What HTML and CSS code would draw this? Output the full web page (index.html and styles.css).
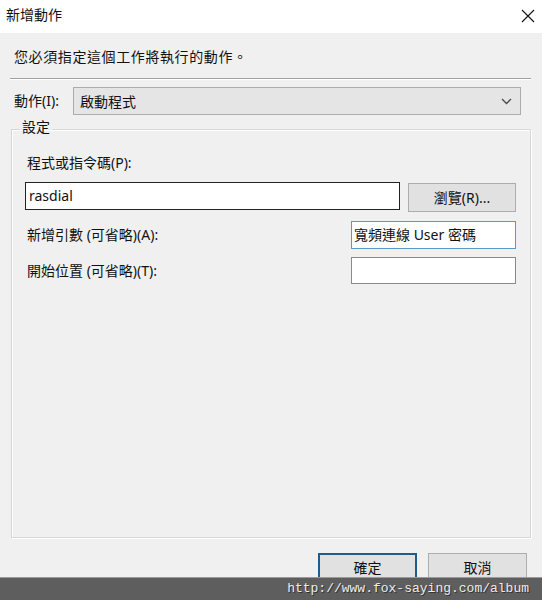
FILE: index.html
```html
<!DOCTYPE html>
<html lang="zh-Hant">
<head>
<meta charset="utf-8">
<title>新增動作</title>
<link rel="stylesheet" href="styles.css">
</head>
<body>
<div class="window">
  <div class="titlebar">
    <span class="title">新增動作</span>
    <svg class="close" width="14" height="14" viewBox="0 0 14 14"><path d="M1 1 L13 13 M13 1 L1 13" stroke="#111" stroke-width="1.1" fill="none"/></svg>
  </div>
  <div class="content">
    <div class="intro">您必須指定這個工作將執行的動作。</div>
    <div class="sep"></div>
    <div class="action-row">
      <span class="action-label">動作(I):</span>
      <div class="combo">
        <span>啟動程式</span>
        <svg class="chev" width="11" height="7" viewBox="0 0 11 7"><path d="M1 1 L5.5 5.5 L10 1" stroke="#4a4a4a" stroke-width="1.3" fill="none"/></svg>
      </div>
    </div>
    <fieldset class="group">
      <legend class="legend">設定</legend>
      <div class="group-inner">
        <div class="field-label first">程式或指令碼(P):</div>
        <div class="prog-row">
          <div class="input input-dark">rasdial</div>
          <div class="btn browse">瀏覽(R)...</div>
        </div>
        <div class="opt-row row-args">
          <span class="field-label">新增引數 (可省略)(A):</span>
          <div class="input input-small input-focus">寬頻連線 User 密碼</div>
        </div>
        <div class="opt-row row-start">
          <span class="field-label">開始位置 (可省略)(T):</span>
          <div class="input input-small input-plain"></div>
        </div>
      </div>
    </fieldset>
    <div class="buttons">
      <div class="btn dlg default">確定</div>
      <div class="btn dlg">取消</div>
    </div>
  </div>
  <div class="watermark">http://www.fox-saying.com/album</div>
</div>
</body>
</html>
```
FILE: styles.css
```css
* { box-sizing: border-box; }
html, body { margin: 0; padding: 0; }
body {
  font-family: "Noto Sans", "Noto Sans CJK TC", sans-serif;
  font-size: 14px;
  color: #111;
  background: #f0f0f0;
}
.window {
  position: relative;
  width: 542px;
  height: 600px;
  overflow: hidden;
  background: #f0f0f0;
}
.titlebar {
  height: 33px;
  background: #fff;
  display: flex;
  align-items: center;
  justify-content: space-between;
  padding: 0 7px 3px 6px;
}
.title { line-height: 20px; }
.close { margin-top: 2px; }
.content {
  padding: 0 11px 0 10px;
}
.intro {
  margin-top: 14px;
  line-height: 20px;
  padding-left: 4px;
  letter-spacing: 0.6px;
}
.sep {
  margin-top: 11px;
  height: 2px;
  border-top: 1px solid #a0a0a0;
  border-bottom: 1px solid #fff;
}
.action-row {
  margin-top: 7px;
  display: flex;
  align-items: center;
}
.action-label {
  width: 63px;
  padding-left: 4px;
  line-height: 20px;
}
.combo {
  width: 448px;
  height: 28px;
  background: #e5e5e5;
  border: 1px solid #acacac;
  display: flex;
  align-items: center;
  justify-content: space-between;
  padding: 0 8px 0 6px;
}
.group {
  margin: 3px 0 0 1px;
  width: 520px;
  height: 420px;
  padding: 0;
  border: 1px solid #d7d7d7;
  box-shadow: inset 1px 1px 0 #fff, 1px 1px 0 #fff;
}
.legend {
  margin-left: 8px;
  padding: 0 2px 4px;
  line-height: 18px;
}
.group-inner {
  padding: 0 13px 0 13px;
}
.field-label {
  line-height: 20px;
  padding-left: 2px;
}
.field-label.first { margin-top: 13px; }
.prog-row {
  margin-top: 9px;
  display: flex;
  align-items: flex-start;
  gap: 8px;
}
.input {
  height: 28px;
  background: #fff;
  border: 1px solid #7a7a7a;
  display: flex;
  align-items: center;
  padding: 0 3px;
  line-height: 20px;
}
.input-dark {
  width: 375px;
  border-color: #222;
}
.btn {
  background: #e1e1e1;
  border: 1px solid #adadad;
  display: flex;
  align-items: center;
  justify-content: center;
  line-height: 20px;
}
.browse {
  margin-top: 1px;
  width: 108px;
  height: 29px;
}
.opt-row {
  display: flex;
  align-items: center;
  justify-content: space-between;
  padding-right: 1px;
}
.row-args { margin-top: 9px; }
.row-start { margin-top: 8px; }
.input-small { width: 165px; padding-left: 2px; }
.input-focus { border-color: #5a9ac4; }
.input-plain { border-color: #8a8a8a; height: 27px; }
.buttons {
  margin-top: 15px;
  display: flex;
  justify-content: flex-end;
  gap: 11px;
  padding-right: 4px;
}
.dlg {
  width: 99px;
  height: 30px;
}
.dlg.default {
  border: 2px solid #1d5c8b;
}
.watermark {
  position: absolute;
  left: 0;
  right: 0;
  bottom: 0;
  height: 23px;
  background: #5e5e5e;
  border-top: 1px solid #9a9a9a;
  color: #ececec;
  font-family: "Liberation Mono", monospace;
  font-size: 13px;
  line-height: 22px;
  text-align: right;
  padding-right: 13px;
  text-shadow: 1px 1px 0 #333;
}
```
